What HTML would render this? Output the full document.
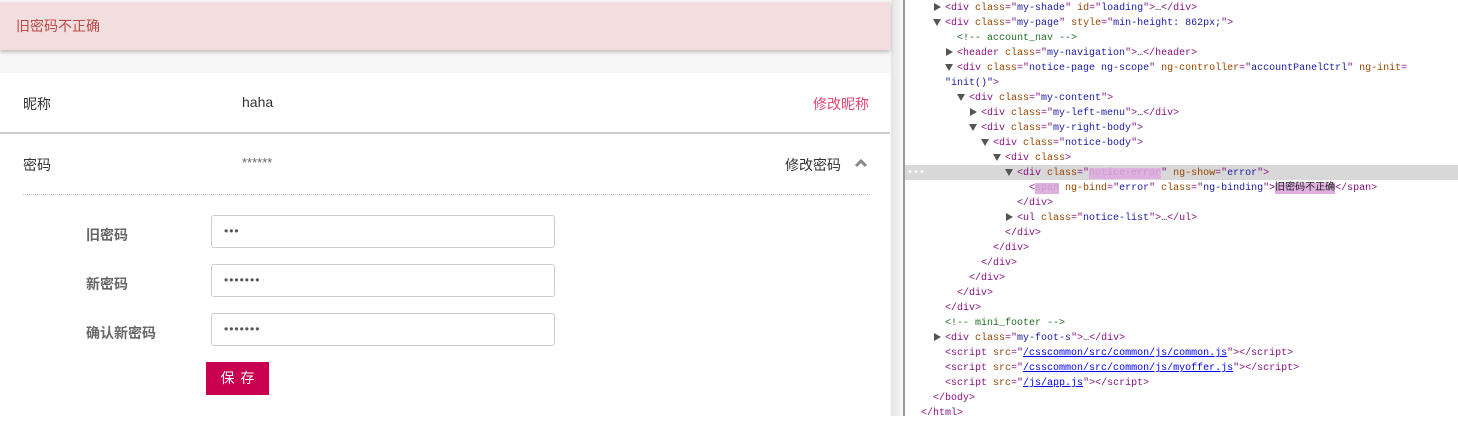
<!DOCTYPE html>
<html><head><meta charset="utf-8"><style>
body{margin:0;width:1458px;height:416px;overflow:hidden;background:#fff;font-family:"Liberation Sans","Noto Sans CJK SC",sans-serif;position:relative}
.left{position:absolute;left:0;top:0;width:891px;height:416px;background:#f7f7f7}
.gut{position:absolute;left:891px;top:0;width:12px;height:416px;background:linear-gradient(90deg,#e4e4e4,#f8f8f8)}
.err{position:absolute;left:0;top:2px;width:890px;height:48px;background:#f2dede;box-shadow:0 2px 4px rgba(0,0,0,.25);color:#b94a48;font-size:14px;line-height:48px;padding-left:16px;box-sizing:border-box}
.card{position:absolute;left:0;top:73px;width:890px;height:343px;background:#fff}
.t{position:absolute;font-size:14px;color:#333}
.in{position:absolute;left:211px;width:344px;height:33px;border:1px solid #ccc;border-radius:3px;box-sizing:border-box;font-size:12px;line-height:31px;padding-left:12px;color:#555;letter-spacing:1px}
.lb{position:absolute;left:86px;font-size:14px;font-weight:bold;color:#666}
.dev{position:absolute;left:903px;top:0;width:555px;height:416px;border-left:2px solid #999;box-sizing:border-box;font-family:"Liberation Mono","Noto Sans CJK SC",monospace;font-size:10px;color:#881280}
.l{position:absolute;white-space:pre;height:15px;line-height:15px;top:1px}
.a{color:#994500}.v{color:#1a1aa6}.c{color:#236e25}.k{color:#222}.u{text-decoration:underline;color:#00e}
.r,.d{display:inline-block;width:0;height:0;margin-right:4px;vertical-align:middle}
.r{border-left:7px solid #555;border-top:4px solid transparent;border-bottom:4px solid transparent;margin-left:1px}
.d{border-top:7px solid #555;border-left:4px solid transparent;border-right:4px solid transparent}
</style></head><body>
<div class="left"></div><div class="gut"></div>
<div class="err">旧密码不正确</div>
<div class="card">
<div class="t" style="left:23px;top:21px">昵称</div>
<div class="t" style="left:242px;top:21px">haha</div>
<div class="t" style="left:813px;top:21px;color:#e2456f">修改昵称</div>
<div style="position:absolute;left:0;top:59px;width:890px;border-top:2px solid #ccc"></div>
<div class="t" style="left:23px;top:82px">密码</div>
<div class="t" style="left:242px;top:82px;font-size:13px;color:#666">******</div>
<div class="t" style="left:785px;top:82px">修改密码</div>
<svg style="position:absolute;left:854px;top:85px" width="14" height="10"><path d="M2 8 L7 3 L12 8" stroke="#888" stroke-width="3" fill="none"/></svg>
<div style="position:absolute;left:23px;top:121px;width:847px;border-top:1px dotted #bbb"></div>
<div class="lb" style="top:152px">旧密码</div>
<div class="lb" style="top:201px">新密码</div>
<div class="lb" style="top:250px">确认新密码</div>
<div class="in" style="top:142px">•••</div>
<div class="in" style="top:191px">•••••••</div>
<div class="in" style="top:240px">•••••••</div>
<div style="position:absolute;left:206px;top:289px;width:63px;height:33px;background:#c8004f;color:#fff;font-size:14px;line-height:33px;text-align:center;letter-spacing:6px;text-indent:6px">保存</div>
</div>
<div class="dev">
<div style="position:absolute;left:0;top:165px;width:553px;height:15px;background:#d8d8d8"></div>
<div class="l" style="top:1px;left:28px"><span class="r"></span>&lt;div <span class="a">class</span>="<span class="v">my-shade</span>" <span class="a">id</span>="<span class="v">loading</span>"&gt;<span class="k">…</span>&lt;/div&gt;</div>
<div class="l" style="top:16px;left:28px"><span class="d"></span>&lt;div <span class="a">class</span>="<span class="v">my-page</span>" <span class="a">style</span>="<span class="v">min-height: 862px;</span>"&gt;</div>
<div class="l c" style="top:31px;left:52px">&lt;!-- account_nav --&gt;</div>
<div class="l" style="top:46px;left:40px"><span class="r"></span>&lt;header <span class="a">class</span>="<span class="v">my-navigation</span>"&gt;<span class="k">…</span>&lt;/header&gt;</div>
<div class="l" style="top:61px;left:40px"><span class="d"></span>&lt;div <span class="a">class</span>="<span class="v">notice-page ng-scope</span>" <span class="a">ng-controller</span>="<span class="v">accountPanelCtrl</span>" <span class="a">ng-init</span>=</div>
<div class="l" style="top:76px;left:40px"><span class="v">"init()"</span>&gt;</div>
<div class="l" style="top:91px;left:52px"><span class="d"></span>&lt;div <span class="a">class</span>="<span class="v">my-content</span>"&gt;</div>
<div class="l" style="top:106px;left:64px"><span class="r"></span>&lt;div <span class="a">class</span>="<span class="v">my-left-menu</span>"&gt;<span class="k">…</span>&lt;/div&gt;</div>
<div class="l" style="top:121px;left:64px"><span class="d"></span>&lt;div <span class="a">class</span>="<span class="v">my-right-body</span>"&gt;</div>
<div class="l" style="top:136px;left:76px"><span class="d"></span>&lt;div <span class="a">class</span>="<span class="v">notice-body</span>"&gt;</div>
<div class="l" style="top:151px;left:88px"><span class="d"></span>&lt;div <span class="a">class</span>&gt;</div>
<div class="l" style="top:166px;left:2px;color:#fff">•••</div>
<div class="l" style="top:166px;left:100px"><span class="d"></span>&lt;div <span class="a">class</span>="<span class="v" style="background:#e0b0e0;color:#c8a0c8">notice-error</span>" <span class="a">ng-show</span>="<span class="v">error</span>"&gt;</div>
<div class="l" style="top:181px;left:124px">&lt;<span style="background:#e0b0e0;color:#c8a0c8">span</span> <span class="a">ng-bind</span>="<span class="v">error</span>" <span class="a">class</span>="<span class="v">ng-binding</span>"&gt;<span class="k" style="background:#e0b0e0">旧密码不正确</span>&lt;/span&gt;</div>
<div class="l" style="top:196px;left:112px">&lt;/div&gt;</div>
<div class="l" style="top:211px;left:100px"><span class="r"></span>&lt;ul <span class="a">class</span>="<span class="v">notice-list</span>"&gt;<span class="k">…</span>&lt;/ul&gt;</div>
<div class="l" style="top:226px;left:100px">&lt;/div&gt;</div>
<div class="l" style="top:241px;left:88px">&lt;/div&gt;</div>
<div class="l" style="top:256px;left:76px">&lt;/div&gt;</div>
<div class="l" style="top:271px;left:64px">&lt;/div&gt;</div>
<div class="l" style="top:286px;left:52px">&lt;/div&gt;</div>
<div class="l" style="top:301px;left:40px">&lt;/div&gt;</div>
<div class="l c" style="top:316px;left:40px">&lt;!-- mini_footer --&gt;</div>
<div class="l" style="top:331px;left:28px"><span class="r"></span>&lt;div <span class="a">class</span>="<span class="v">my-foot-s</span>"&gt;<span class="k">…</span>&lt;/div&gt;</div>
<div class="l" style="top:346px;left:40px">&lt;script <span class="a">src</span>="<span class="u">/csscommon/src/common/js/common.js</span>"&gt;&lt;/script&gt;</div>
<div class="l" style="top:361px;left:40px">&lt;script <span class="a">src</span>="<span class="u">/csscommon/src/common/js/myoffer.js</span>"&gt;&lt;/script&gt;</div>
<div class="l" style="top:376px;left:40px">&lt;script <span class="a">src</span>="<span class="u">/js/app.js</span>"&gt;&lt;/script&gt;</div>
<div class="l" style="top:391px;left:28px">&lt;/body&gt;</div>
<div class="l" style="top:406px;left:16px">&lt;/html&gt;</div>
</div>
</body></html>
